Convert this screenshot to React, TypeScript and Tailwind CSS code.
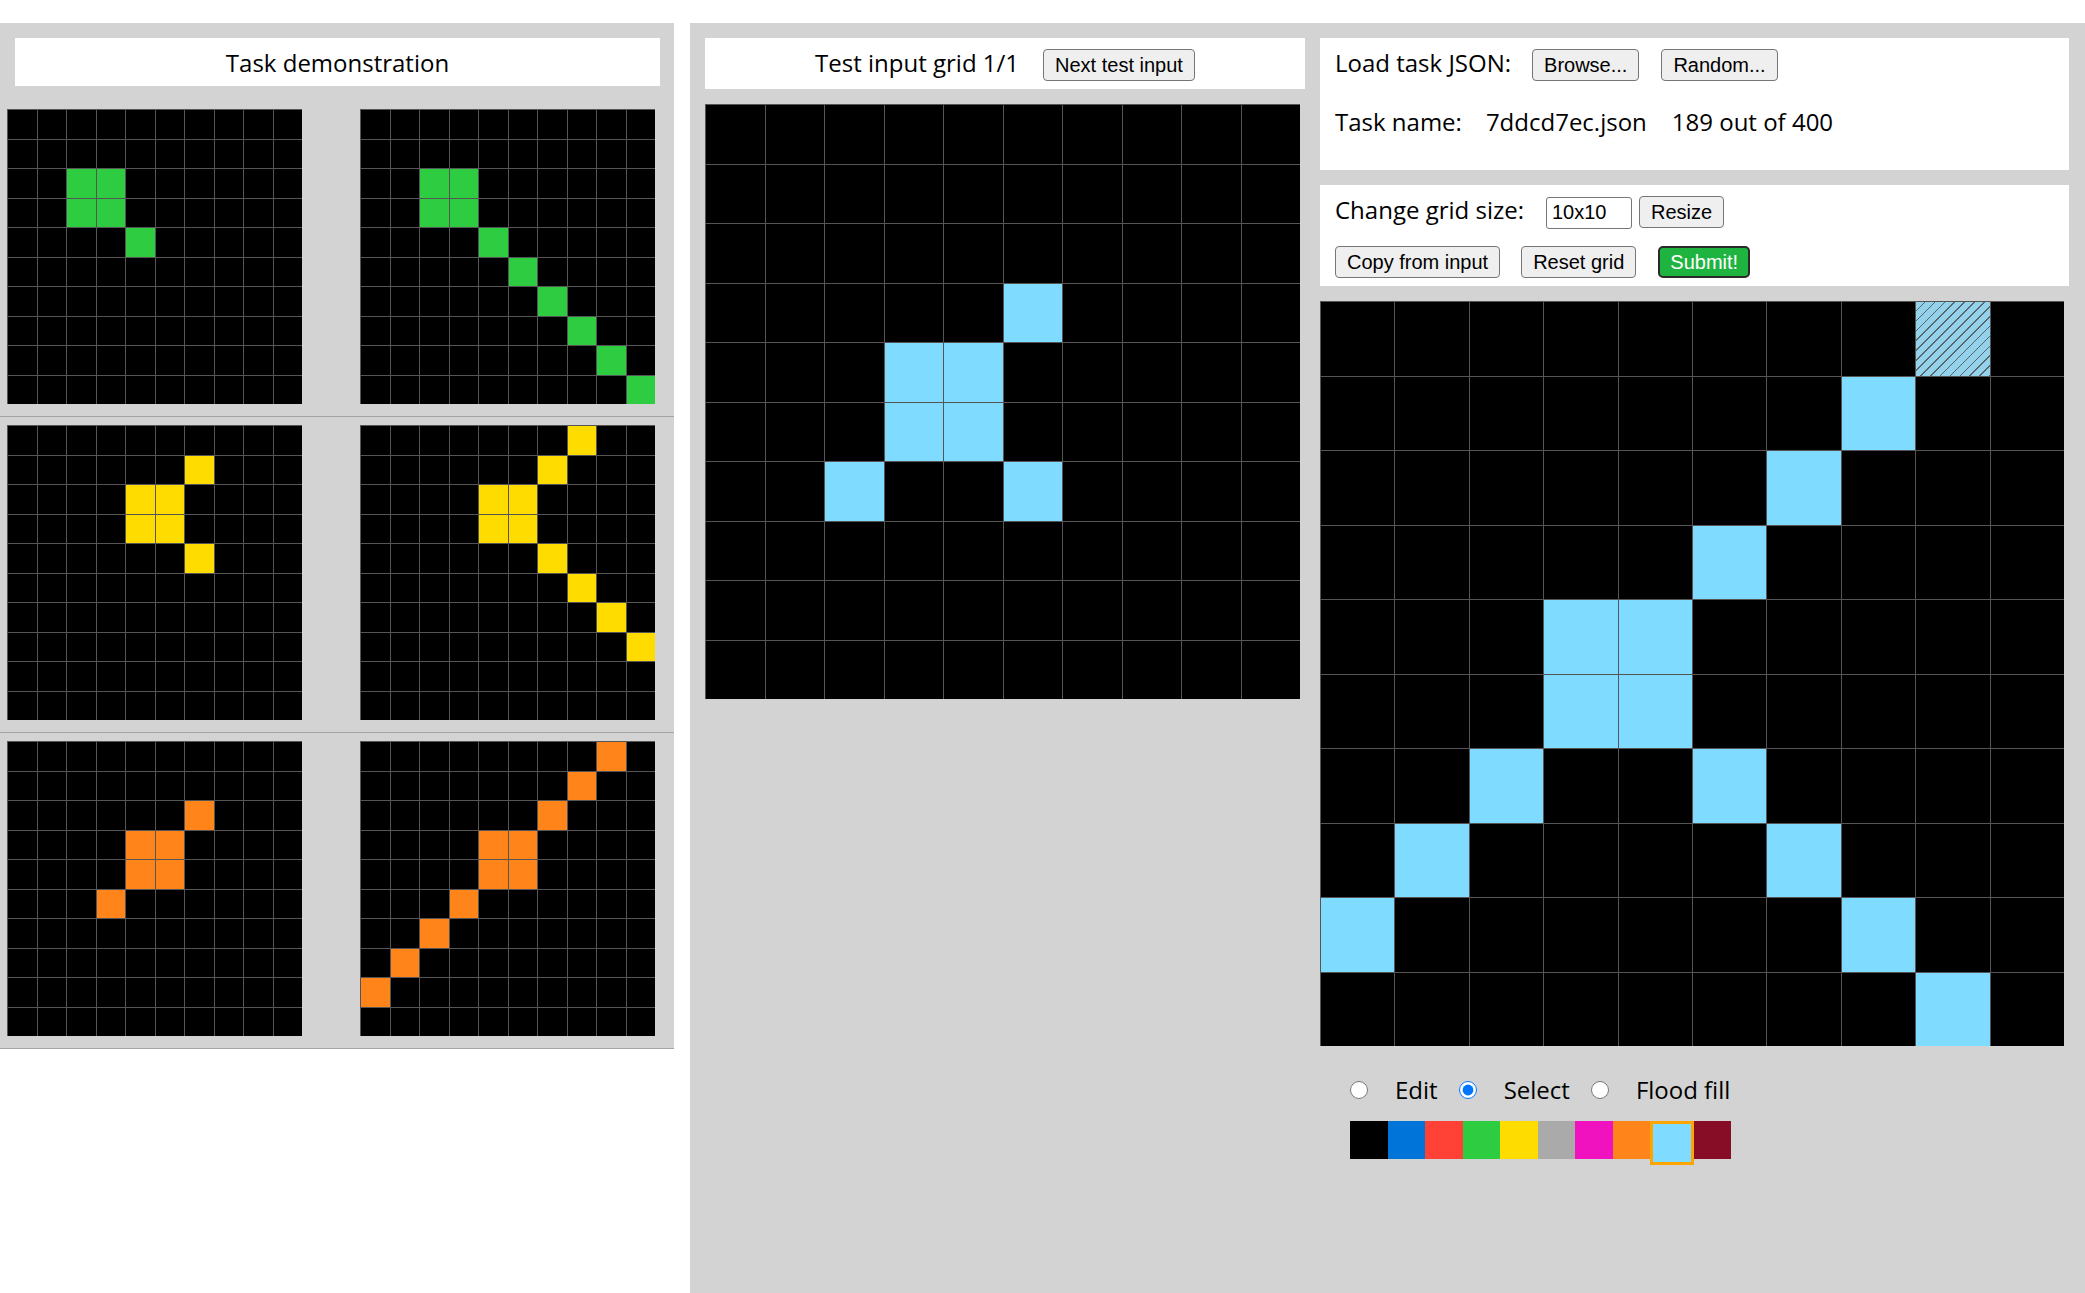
import React from "react";

type Cell = [number, number];

const COLORS: Record<number, string> = {
  0: "bg-[#000000]",
  1: "bg-[#0074d9]",
  2: "bg-[#ff4136]",
  3: "bg-[#2ecc40]",
  4: "bg-[#ffdc00]",
  5: "bg-[#aaaaaa]",
  6: "bg-[#f012be]",
  7: "bg-[#ff851b]",
  8: "bg-[#7fdbff]",
  9: "bg-[#870c25]",
};

function makeGrid(cells: Cell[], color: number): number[][] {
  const g: number[][] = Array.from({ length: 10 }, () => Array(10).fill(0));
  cells.forEach(([r, c]) => {
    g[r][c] = color;
  });
  return g;
}

const block = (r: number, c: number): Cell[] => [
  [r, c],
  [r, c + 1],
  [r + 1, c],
  [r + 1, c + 1],
];

const pairs = [
  {
    input: makeGrid([...block(2, 2), [4, 4]], 3),
    output: makeGrid([...block(2, 2), [4, 4], [5, 5], [6, 6], [7, 7], [8, 8], [9, 9]], 3),
  },
  {
    input: makeGrid([[1, 6], ...block(2, 4), [4, 6]], 4),
    output: makeGrid([[0, 7], [1, 6], ...block(2, 4), [4, 6], [5, 7], [6, 8], [7, 9]], 4),
  },
  {
    input: makeGrid([[2, 6], ...block(3, 4), [5, 3]], 7),
    output: makeGrid([[0, 8], [1, 7], [2, 6], ...block(3, 4), [5, 3], [6, 2], [7, 1], [8, 0]], 7),
  },
];

const testInput = makeGrid([[3, 5], ...block(4, 3), [6, 2], [6, 5]], 8);
const testOutput = makeGrid(
  [[0, 8], [1, 7], [2, 6], [3, 5], ...block(4, 3), [6, 2], [6, 5], [7, 1], [7, 6], [8, 0], [8, 7], [9, 8]],
  8
);

function Grid({
  data,
  sizeClass,
  hatch,
}: {
  data: number[][];
  sizeClass: string;
  hatch?: Cell;
}) {
  return (
    <div className={`grid grid-cols-10 grid-rows-10 shrink-0 ${sizeClass}`}>
      {data.map((row, r) =>
        row.map((v, c) => {
          const isHatch = hatch && hatch[0] === r && hatch[1] === c;
          return (
            <div
              key={`${r}-${c}`}
              className={
                isHatch
                  ? "border-t border-l border-[#555555] bg-[image:repeating-linear-gradient(135deg,#93d2ea_0px,#93d2ea_5.8px,#56666c_5.8px,#56666c_7px)]"
                  : `border-t border-l border-[#555555] ${COLORS[v]}`
              }
            />
          );
        })
      )}
    </div>
  );
}

function Btn({ children, className = "" }: { children: React.ReactNode; className?: string }) {
  return (
    <button
      className={`h-[32px] px-[11px] border border-[#767676] rounded-[4px] bg-[#efefef] text-[20px] leading-none text-black font-['Liberation_Sans',Arial,sans-serif] shrink-0 ${className}`}
    >
      {children}
    </button>
  );
}

export default function App() {
  return (
    <div className="w-[2085px] h-[1293px] bg-white overflow-hidden text-black font-['Open_Sans','Noto_Sans',sans-serif] text-[24px]">
      <div className="flex items-start pt-[23px]">
        {/* Left panel: task demonstration */}
        <div className="w-[674px] shrink-0 bg-[#d3d3d3]">
          <div className="pt-[15px] pl-[15px] pr-[14px]">
            <div className="h-[48px] bg-white flex items-center justify-center leading-[33px]">
              Task demonstration
            </div>
          </div>
          <div className="mt-[15px]">
            {pairs.map((p, i) => (
              <div
                key={i}
                className="flex pt-[8px] pb-[12px] pl-[7px] gap-[58px] border-b border-[#a3a3a3]"
              >
                <Grid data={p.input} sizeClass="w-[295px] h-[295px]" />
                <Grid data={p.output} sizeClass="w-[295px] h-[295px]" />
              </div>
            ))}
          </div>
        </div>

        <div className="w-[16px] shrink-0" />

        {/* Right container */}
        <div className="flex-1 h-[1270px] bg-[#d3d3d3] flex pl-[15px] pt-[15px] gap-[15px]">
          {/* Middle column */}
          <div className="w-[600px] shrink-0 flex flex-col">
            <div className="h-[51px] bg-white flex justify-center items-baseline pt-[8px]">
              <span className="leading-[33px]">Test input grid 1/1</span>
              <Btn className="ml-[24px]">Next test input</Btn>
            </div>
            <div className="mt-[15px]">
              <Grid data={testInput} sizeClass="w-[595px] h-[595px]" />
            </div>
          </div>

          {/* Right column */}
          <div className="w-[749px] shrink-0 flex flex-col">
            <div className="h-[132px] bg-white pl-[15px] pt-[8px]">
              <div className="flex items-baseline">
                <span className="leading-[33px]">Load task JSON:</span>
                <Btn className="ml-[21px]">Browse...</Btn>
                <Btn className="ml-[22px]">Random...</Btn>
              </div>
              <div className="flex items-baseline mt-[24px] leading-[33px]">
                <span>Task name:</span>
                <span className="ml-[24px]">7ddcd7ec.json</span>
                <span className="ml-[25px]">189 out of 400</span>
              </div>
            </div>

            <div className="h-[101px] bg-white pl-[15px] pt-[8px] mt-[15px]">
              <div className="flex items-baseline">
                <span className="leading-[33px]">Change grid size:</span>
                <input
                  defaultValue="10x10"
                  className="ml-[22px] w-[86px] h-[32px] px-[5px] border border-[#767676] rounded-[3px] bg-white text-[20px] text-black font-['Liberation_Sans',Arial,sans-serif] outline-none"
                />
                <Btn className="ml-[7px]">Resize</Btn>
              </div>
              <div className="flex items-baseline mt-[17px]">
                <Btn>Copy from input</Btn>
                <Btn className="ml-[21px]">Reset grid</Btn>
                <button className="ml-[22px] h-[32px] px-[10px] border-2 border-[#2a2a2a] rounded-[5px] bg-[#1fb440] text-white text-[20px] leading-none font-['Liberation_Sans',Arial,sans-serif] shrink-0">
                  Submit!
                </button>
              </div>
            </div>

            <div className="mt-[15px]">
              <Grid data={testOutput} sizeClass="w-[744px] h-[745px]" hatch={[0, 8]} />
            </div>

            <div className="flex items-center pl-[30px] mt-[27px] h-[33px] leading-[33px]">
              <input type="radio" name="mode" className="w-[18px] h-[18px] m-0 shrink-0" />
              <span className="ml-[27px]">Edit</span>
              <input
                type="radio"
                name="mode"
                defaultChecked
                className="w-[18px] h-[18px] m-0 ml-[21px] shrink-0"
              />
              <span className="ml-[27px]">Select</span>
              <input type="radio" name="mode" className="w-[18px] h-[18px] m-0 ml-[21px] shrink-0" />
              <span className="ml-[27px]">Flood fill</span>
            </div>

            <div className="flex items-start pl-[30px] mt-[15px]">
              <div className="w-[37.5px] h-[37.5px] bg-[#000000]" />
              <div className="w-[37.5px] h-[37.5px] bg-[#0074d9]" />
              <div className="w-[37.5px] h-[37.5px] bg-[#ff4136]" />
              <div className="w-[37.5px] h-[37.5px] bg-[#2ecc40]" />
              <div className="w-[37.5px] h-[37.5px] bg-[#ffdc00]" />
              <div className="w-[37.5px] h-[37.5px] bg-[#aaaaaa]" />
              <div className="w-[37.5px] h-[37.5px] bg-[#f012be]" />
              <div className="w-[37.5px] h-[37.5px] bg-[#ff851b]" />
              <div className="w-[37.5px] h-[37.5px] box-content border-[3px] border-[#ffa500] bg-[#7fdbff]" />
              <div className="w-[37.5px] h-[37.5px] bg-[#870c25]" />
            </div>
          </div>
        </div>
      </div>
    </div>
  );
}
